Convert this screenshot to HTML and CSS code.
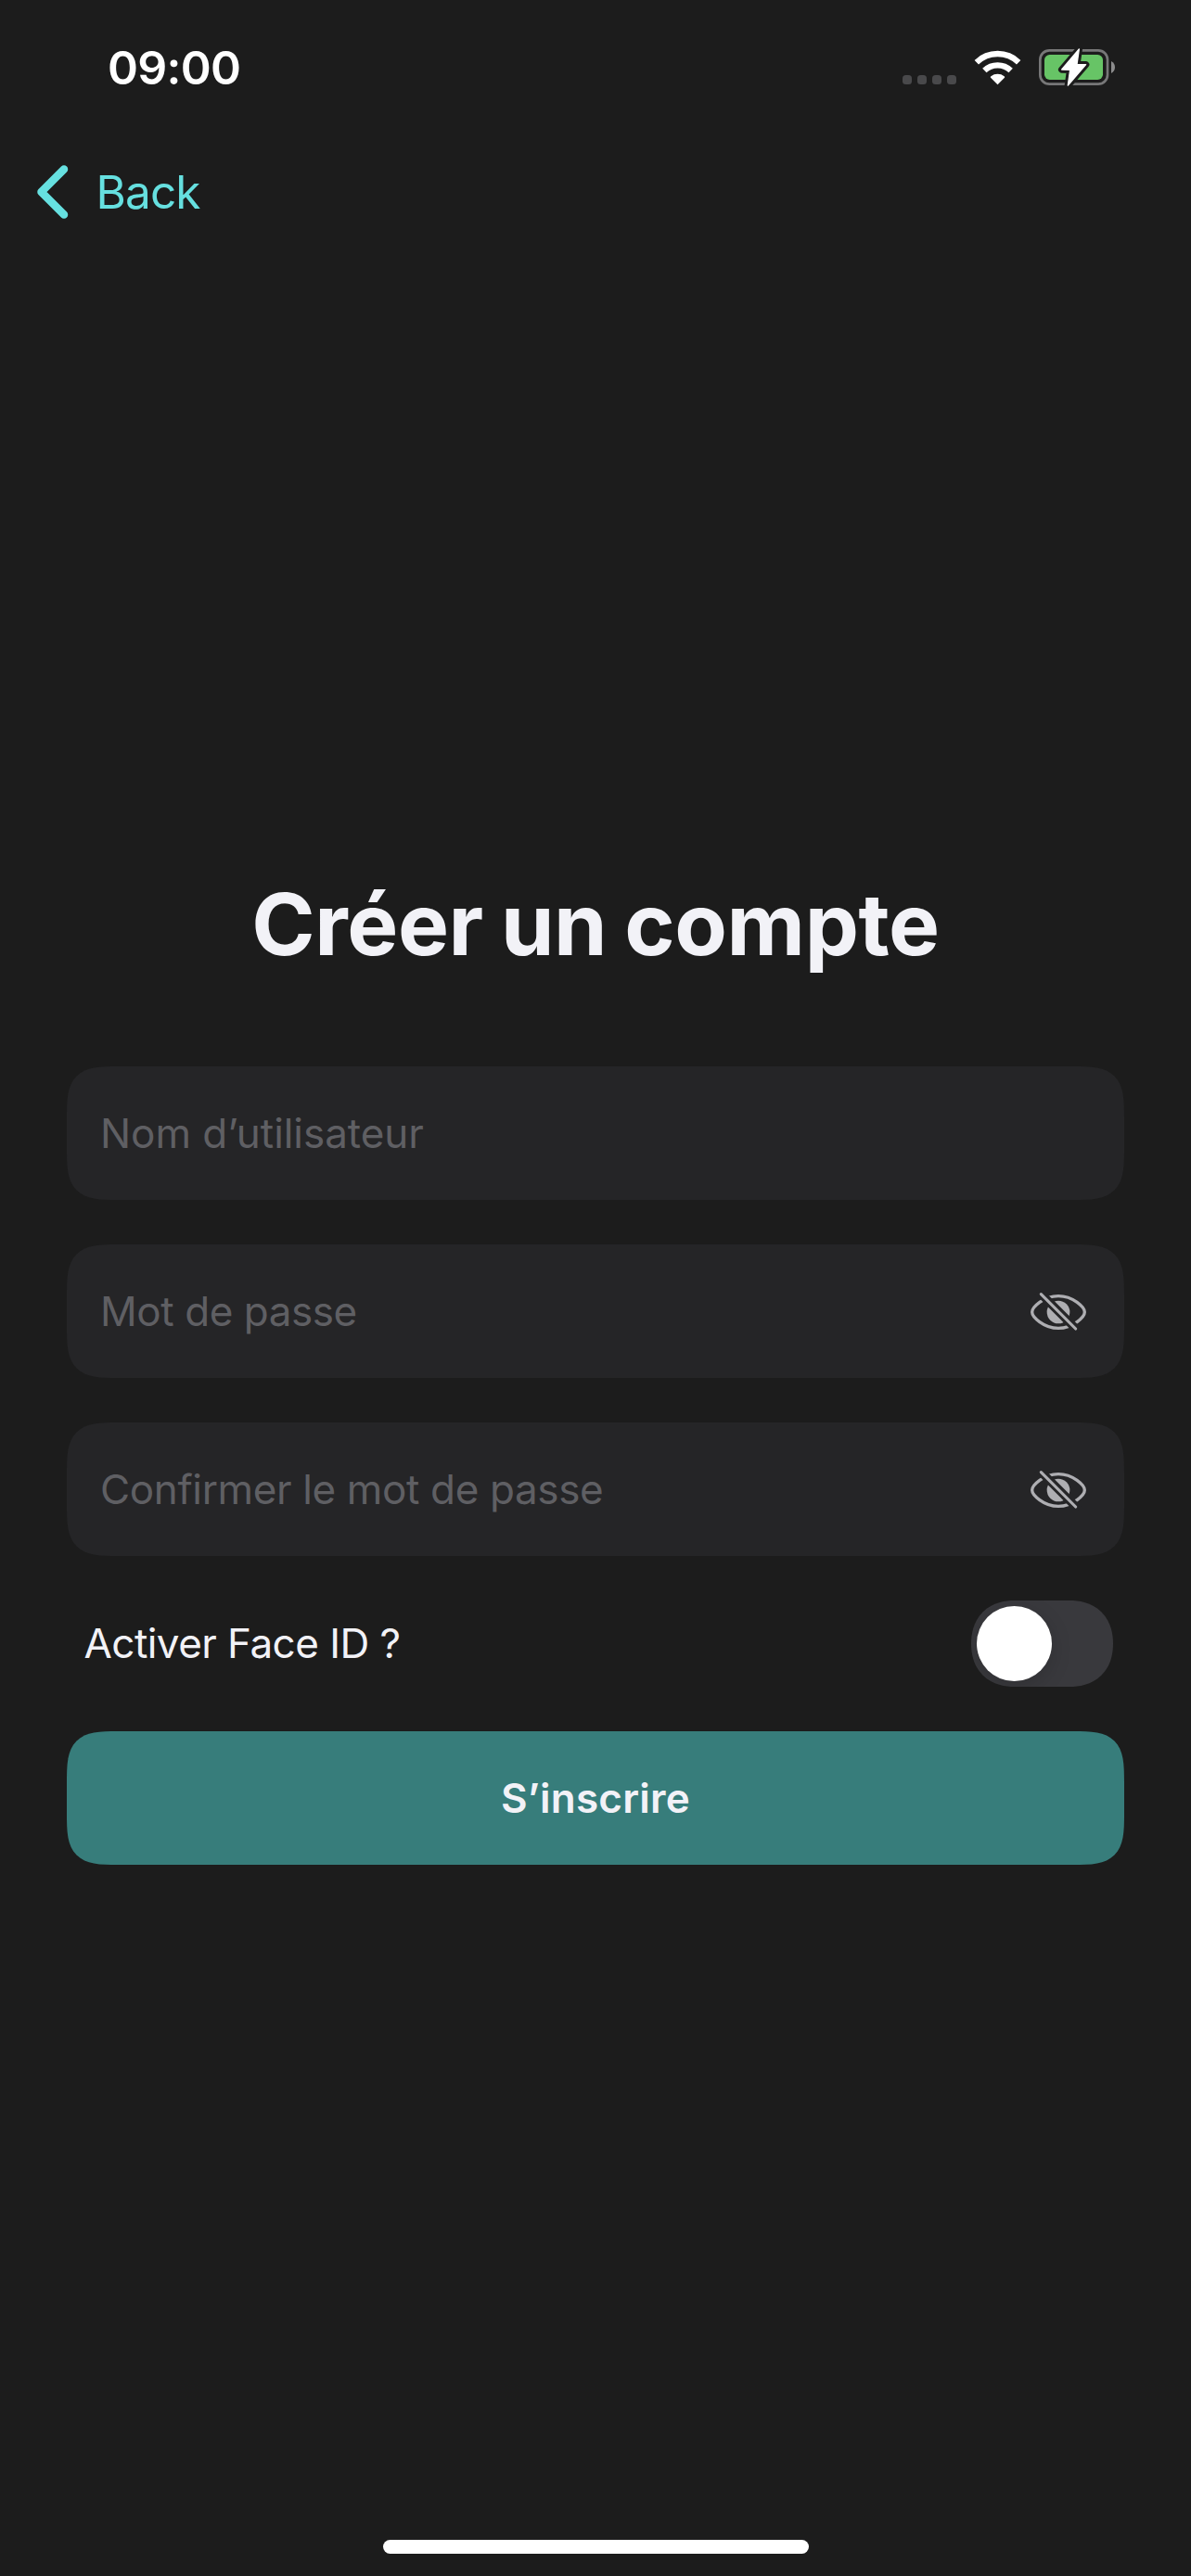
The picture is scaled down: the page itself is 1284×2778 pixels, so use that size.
FILE: index.html
```html
<!DOCTYPE html>
<html lang="fr">
<head>
<meta charset="utf-8">
<title>Créer un compte</title>
<link rel="stylesheet" href="styles.css">
</head>
<body>
<div class="screen">
  <header class="status">
    <span class="time">09:00</span>
    <div class="indicators">
      <div class="dots"><i></i><i></i><i></i><i></i></div>
      <svg class="wifi" viewBox="300 69 153 117" aria-hidden="true">
        <g fill="none" stroke="#fff" stroke-width="19">
          <path d="M308.500 111.500A98 98 0 0 1 444.500 111.500"/>
          <path d="M334 138A62 62 0 0 1 419 138"/>
        </g>
        <path fill="#fff" d="M376.500 184L354 161Q352 158 355 156.500A36 36 0 0 1 398 156.500Q401 158 399 161Z"/>
      </svg>
      <svg class="battery" viewBox="510 60 249 135" aria-hidden="true">
        <rect x="514" y="73" width="218" height="109" rx="30" fill="none" stroke="#777778" stroke-width="8"/>
        <path fill="#8c8c8d" d="M744 108Q756 115 756 127.500Q756 140 744 147Z"/>
        <rect x="528" y="87" width="189" height="81" rx="17" fill="#67c466"/>
        <path class="bolt-edge" d="M640 69L584 135L611 136L604 186L662 119L633 118Z"/>
        <path class="bolt" d="M640 69L584 135L611 136L604 186L662 119L633 118Z"/>
      </svg>
    </div>
  </header>
  <nav class="nav">
    <svg class="chevron" viewBox="0 0 34 58" aria-hidden="true"><path d="M29 4.500L4.500 29L29 53.500"/></svg>
    <span>Back</span>
  </nav>
  <main class="form">
    <h1>Créer un compte</h1>
    <div class="field"><span class="hint-user">Nom d’utilisateur</span></div>
    <div class="field">
      <span class="hint-pass">Mot de passe</span>
      <svg class="eye" viewBox="90 69 186 132" aria-hidden="true">
        <path class="eye-line" d="M98 135C98 120 135 83 183 83S268 120 268 135S231 187 183 187S98 150 98 135Z"/>
        <circle cx="183" cy="135" r="37"/>
        <path class="eye-gap" d="M117 66L249 198"/>
        <path class="eye-slash" d="M127 77L239 189"/>
      </svg>
    </div>
    <div class="field">
      <span class="hint-confirm">Confirmer le mot de passe</span>
      <svg class="eye" viewBox="90 69 186 132" aria-hidden="true">
        <path class="eye-line" d="M98 135C98 120 135 83 183 83S268 120 268 135S231 187 183 187S98 150 98 135Z"/>
        <circle cx="183" cy="135" r="37"/>
        <path class="eye-gap" d="M117 66L249 198"/>
        <path class="eye-slash" d="M127 77L239 189"/>
      </svg>
    </div>
    <div class="option">
      <span class="option-label">Activer Face ID ?</span>
      <div class="switch"><div class="knob"></div></div>
    </div>
    <div class="submit">S’inscrire</div>
  </main>
  <div class="home"></div>
</div>
</body>
</html>
```
FILE: styles.css
```css
* { box-sizing: border-box; }
body { margin: 0; background: #1c1c1c; }
.screen {
  display: flex;
  flex-direction: column;
  width: 1284px;
  height: 2778px;
  background: #1c1c1c;
  color: #f2f2f7;
  font-family: Inter, "Liberation Sans", sans-serif;
  font-size: 44px;
}
.status {
  display: flex;
  justify-content: space-between;
  height: 146px;
  padding: 0 81px 0 116px;
}
.time {
  line-height: 146px;
  font-size: 50px;
  font-weight: 600;
  letter-spacing: -0.7px;
  color: #fff;
}
.indicators { display: flex; align-items: flex-start; }
.dots { display: flex; gap: 6px; padding-top: 81px; margin-right: 19px; }
.dots i { width: 10px; height: 10px; border-radius: 3.5px; background: #49494b; }
.wifi { width: 51px; height: 39px; margin: 53px 19px 0 0; }
.battery { width: 83px; height: 45px; margin-top: 50px; }
.bolt { fill: #fff; stroke: #fff; stroke-width: 4; stroke-linejoin: round; }
.bolt-edge { fill: #1c1c1c; stroke: #1c1c1c; stroke-width: 22; stroke-linejoin: round; }
.nav {
  display: flex;
  align-items: center;
  gap: 30px;
  height: 122px;
  padding-left: 39.5px;
  color: #66e0e0;
  font-size: 49.5px;
  letter-spacing: -0.9px;
}
.chevron { width: 34px; height: 58px; fill: none; stroke: #66e0e0; stroke-width: 8.5; stroke-linecap: round; stroke-linejoin: round; }
.form {
  display: flex;
  flex-direction: column;
  gap: 48px;
  padding: 672px 72px 0;
}
h1 {
  height: 112px;
  margin: 0 0 50px;
  line-height: 112px;
  font-size: 92.5px;
  font-weight: 700;
  letter-spacing: -0.4px;
  word-spacing: -2.5px;
  text-align: center;
  white-space: nowrap;
}
.field, .submit {
  display: flex;
  align-items: center;
  height: 144px;
  border-radius: 55px;
  corner-shape: superellipse(1.7);
}
.field {
  justify-content: space-between;
  padding: 0 40px 0 36px;
  background: #252527;
  color: #5f5f63;
}
.hint-user { letter-spacing: -0.05px; }
.hint-pass { letter-spacing: -0.44px; }
.hint-confirm { letter-spacing: -0.36px; }
.eye { width: 62px; height: 44px; margin-top: 2px; fill: #aeaeb2; }
.eye-line { fill: none; stroke: #aeaeb2; stroke-width: 10; }
.eye-gap { stroke: #252527; stroke-width: 28; }
.eye-slash { stroke: #aeaeb2; stroke-width: 9.5; stroke-linecap: round; }
.option {
  display: flex;
  align-items: center;
  justify-content: space-between;
  height: 93px;
  padding: 0 12px 0 18.5px;
  letter-spacing: -0.55px;
}
.option-label { padding-bottom: 2px; }
.switch {
  display: flex;
  width: 153px;
  height: 93px;
  padding: 6px;
  border-radius: 60px;
  corner-shape: superellipse(1.15);
  overflow: hidden;
  background: #39393d;
}
.knob { width: 81px; height: 81px; border-radius: 50%; background: #fff; box-shadow: 0 6px 22px rgba(0, 0, 0, 0.15); }
.submit {
  justify-content: center;
  background: #377d7b;
  font-weight: 570;
  letter-spacing: 0.25px;
}
.home {
  width: 459px;
  height: 15px;
  margin: auto 412px 24px 413px;
  border-radius: 8px;
  background: #fff;
}
```
